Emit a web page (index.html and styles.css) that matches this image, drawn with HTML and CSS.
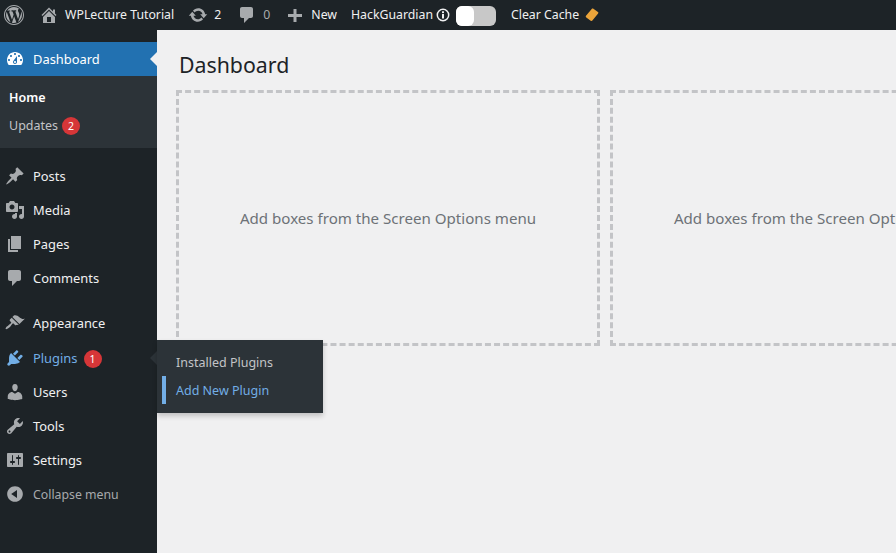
FILE: index.html
```
<!DOCTYPE html>
<html lang="en">
<head>
<meta charset="utf-8">
<title>Dashboard</title>
<link rel="stylesheet" href="styles.css">
</head>
<body>
<header class="bar">
  <svg class="logo" viewBox="0 0 20 20"><path d="M20 10c0-5.52-4.48-10-10-10S0 4.48 0 10s4.48 10 10 10 10-4.48 10-10zM10 1.01c4.97 0 8.99 4.02 8.99 8.99s-4.02 8.99-8.99 8.99S1.01 14.97 1.01 10 5.03 1.01 10 1.01zM8.01 14.82L4.96 6.61c.49-.03 1.05-.08 1.05-.08.43-.05.38-1.01-.06-.99 0 0-1.29.1-2.13.1-.15 0-.33 0-.52-.01 1.44-2.17 3.9-3.6 6.7-3.6 2.09 0 3.99.79 5.41 2.09-.6-.1-1.45.35-1.45 1.42 0 .66.38 1.22.79 1.88.31.54.5 1.22.5 2.21 0 1.34-1.27 4.48-1.27 4.48l-2.71-7.5c.48-.03.75-.16.75-.16.43-.05.38-1.1-.05-1.08 0 0-1.3.11-2.14.11-.78 0-2.11-.11-2.11-.11-.43-.02-.48 1.06-.05 1.08l.84.08 1.12 3.04zm6.02 2.15L16.64 10s.67-1.69.39-3.81c.63 1.14.94 2.42.94 3.81 0 2.96-1.56 5.58-3.94 6.97zM2.68 6.77L6.5 17.25c-2.67-1.3-4.47-4.08-4.47-7.25 0-1.16.2-2.23.65-3.23zm7.45 4.53l2.29 6.25c-.75.27-1.57.42-2.42.42-.72 0-1.41-.11-2.06-.3z"/></svg>
  <span class="bar-item site">
    <svg class="bar-icon" viewBox="0 0 20 20"><path d="M16 8.5l1.53 1.53-1.06 1.06L10 4.62l-6.47 6.47-1.06-1.06L10 2.5l4 4v-2h2v4zm-6-2.46l6 5.99V18H4v-5.97zM12 17v-5H8v5h4z"/></svg>
    <span>WPLecture Tutorial</span>
  </span>
  <span class="bar-item updates">
    <svg class="bar-icon" viewBox="0 0 20 20"><path d="M10.2 3.28c3.53 0 6.43 2.61 6.92 6h2.08l-3.5 4-3.5-4h2.32c-.45-1.97-2.21-3.45-4.32-3.45-1.45 0-2.73.71-3.54 1.78L4.95 5.66C6.23 4.2 8.11 3.28 10.2 3.28zm-.4 13.44c-3.52 0-6.43-2.61-6.92-6H.8l3.5-4c1.17 1.33 2.33 2.67 3.5 4H5.48c.45 1.97 2.21 3.45 4.32 3.45 1.45 0 2.73-.71 3.54-1.78l1.71 1.95c-1.28 1.46-3.15 2.38-5.25 2.38z"/></svg>
    <span>2</span>
  </span>
  <span class="bar-item comments">
    <svg class="bar-icon" viewBox="0 0 20 20"><path d="M5 2h9c1.1 0 2 .9 2 2v7c0 1.1-.9 2-2 2h-2l-5 5v-5H5c-1.1 0-2-.9-2-2V4c0-1.1.9-2 2-2z"/></svg>
    <span class="muted">0</span>
  </span>
  <span class="bar-item new">
    <svg class="bar-icon" viewBox="0 0 20 20"><path d="M17 9v3h-5.500v5h-3v-5H3V9h5.500V4h3v5z"/></svg>
    <span>New</span>
  </span>
  <span class="bar-item guardian">
    <span>HackGuardian</span>
    <svg class="info" viewBox="0 0 14 14"><circle cx="7" cy="7" r="5.700" fill="none" stroke="#f0f0f1" stroke-width="1.500"/><rect x="6" y="6" width="2" height="4.500" fill="#f0f0f1"/><rect x="6" y="3.300" width="2" height="1.800" fill="#f0f0f1"/></svg>
    <span class="toggle"><span class="knob"></span></span>
  </span>
  <span class="bar-item cache">
    <span>Clear Cache</span>
    <svg class="cache-icon" viewBox="0 0 14 14"><path d="M8.400.800l4.500 3.300c.6.400.6 1 .2 1.500l-5.700 7c-.5.600-1.200.6-1.700.2L1.300 9.500c-.6-.4-.7-1.100-.3-1.700L6.700 1c.5-.6 1.100-.6 1.700-.2z" fill="#eba43a"/></svg>
  </span>
</header>

<div class="layout">
  <nav class="side">
    <a class="item current">
      <svg class="ico" viewBox="0 0 20 20"><path d="M3.760 16h12.480c1.100-1.370 1.760-3.110 1.760-5 0-4.420-3.580-8-8-8s-8 3.580-8 8c0 1.890.660 3.630 1.760 5zM10 4c.550 0 1 .450 1 1s-.450 1-1 1-1-.450-1-1 .450-1 1-1zM6 6c.550 0 1 .450 1 1s-.450 1-1 1-1-.450-1-1 .450-1 1-1zm8 0c.550 0 1 .450 1 1s-.450 1-1 1-1-.450-1-1 .450-1 1-1zm-5.370 5.550L12 7v6c0 1.100-.900 2-2 2s-2-.900-2-2c0-.570.240-1.080.630-1.450zM4 10c.550 0 1 .450 1 1s-.450 1-1 1-1-.450-1-1 .450-1 1-1zm12 0c.550 0 1 .450 1 1s-.450 1-1 1-1-.450-1-1 .450-1 1-1zm-5 3c0-.550-.450-1-1-1s-1 .450-1 1 .450 1 1 1 1-.450 1-1z"/></svg>
      <span>Dashboard</span>
      <i class="notch"></i>
    </a>
    <div class="sub">
      <a class="sub-link strong">Home</a>
      <a class="sub-link">Updates <b class="badge">2</b></a>
    </div>
    <a class="item first">
      <svg class="ico" viewBox="0 0 20 20"><path d="M10.440 3.020l1.820-1.820 6.360 6.350-1.830 1.820c-1.050-.680-2.480-.570-3.410.360l-.750.750c-.920.930-1.040 2.350-.350 3.410l-1.830 1.820-2.410-2.410-2.800 2.790c-.420.420-3.380 2.710-3.800 2.290s1.860-3.390 2.280-3.810l2.790-2.790L4.100 9.360l1.830-1.820c1.050.690 2.480.570 3.400-.360l.750-.750c.930-.920 1.050-2.350.360-3.410z"/></svg>
      <span>Posts</span>
    </a>
    <a class="item">
      <svg class="ico" viewBox="0 0 20 20"><path d="M13 11V4c0-.550-.450-1-1-1h-1.670L9 1H5L3.670 3H2c-.550 0-1 .450-1 1v7c0 .550.450 1 1 1h10c.550 0 1-.450 1-1zM7 4.500c1.380 0 2.500 1.120 2.500 2.500S8.380 9.500 7 9.500 4.500 8.380 4.500 7 5.620 4.500 7 4.500zM14 6h5v10.500c0 1.380-1.120 2.500-2.500 2.500S14 17.880 14 16.500s1.120-2.500 2.500-2.500c.170 0 .340.020.500.050V9h-3V6zm-4 8.050V13h2v3.500c0 1.380-1.120 2.500-2.500 2.500S7 17.880 7 16.500 8.120 14 9.500 14c.170 0 .340.020.500.050z"/></svg>
      <span>Media</span>
    </a>
    <a class="item">
      <svg class="ico" viewBox="0 0 20 20"><path d="M6 15V2h10v13H6zm-1 1h8v2H3V5h2v11z"/></svg>
      <span>Pages</span>
    </a>
    <a class="item">
      <svg class="ico" viewBox="0 0 20 20"><path d="M5 2h9c1.100 0 2 .900 2 2v7c0 1.100-.900 2-2 2h-2l-5 5v-5H5c-1.100 0-2-.900-2-2V4c0-1.100.900-2 2-2z"/></svg>
      <span>Comments</span>
    </a>
    <a class="item first">
      <svg class="ico" viewBox="0 0 20 20"><path d="M14.480 11.060L7.410 3.990l1.500-1.500c.500-.560 2.300-.470 3.510.320 1.210.800 1.430 1.280 2.910 2.100 1.180.640 2.450 1.260 4.450.850zm-.710.710L6.700 4.700 4.930 6.470c-.390.390-.390 1.020 0 1.410l1.060 1.060c.390.390.390 1.030 0 1.420-.600.600-1.430 1.110-2.210 1.690-.350.260-.700.530-1.010.840C1.430 13.230.180 15.600.700 16.120c.520.520 2.900-.720 4.210-2.070.310-.310.580-.660.840-1.010.580-.780 1.090-1.610 1.690-2.210.390-.390 1.030-.390 1.420 0l1.060 1.060c.390.390 1.020.390 1.410 0z"/></svg>
      <span>Appearance</span>
    </a>
    <a class="item plugins">
      <svg class="ico" viewBox="0 0 20 20"><path d="M13.110 4.360L9.870 7.600 8 5.730l3.240-3.240c.350-.340 1.050-.200 1.560.320.520.510.660 1.210.310 1.550zm-8 1.770l.910-1.120 9.010 9.010-1.190.840c-.710.710-2.630 1.160-3.820 1.160H6.140L4.900 17.260c-.590.590-1.540.590-2.120 0-.590-.580-.590-1.530 0-2.120l1.240-1.240v-3.880c0-1.130.400-3.190 1.090-3.890zm7.260 3.970l3.240-3.240c.340-.350 1.040-.210 1.550.310.520.510.660 1.210.310 1.550l-3.240 3.250z"/></svg>
      <span>Plugins</span>
      <b class="badge">1</b>
      <i class="pointer"></i>
      <div class="flyout">
        <span class="fly-link">Installed Plugins</span>
        <span class="fly-link active">Add New Plugin</span>
      </div>
    </a>
    <a class="item">
      <svg class="ico" viewBox="0 0 20 20"><path d="M10 9.250c-2.270 0-2.730-3.440-2.730-3.440C7 4.020 7.820 2 9.970 2c2.160 0 2.980 2.020 2.710 3.810 0 0-.410 3.440-2.680 3.440zm0 2.570L12.720 10c2.390 0 4.520 2.330 4.520 4.530v2.490s-3.650 1.130-7.240 1.130c-3.650 0-7.240-1.130-7.240-1.130v-2.490c0-2.250 1.940-4.480 4.470-4.480z"/></svg>
      <span>Users</span>
    </a>
    <a class="item">
      <svg class="ico" viewBox="0 0 20 20"><path d="M16.680 9.770c-1.340 1.340-3.300 1.670-4.950.990l-5.410 6.520c-.990.990-2.590.990-3.580 0s-.990-2.590 0-3.570l6.520-5.420c-.680-1.650-.350-3.610.990-4.950 1.280-1.280 3.120-1.620 4.720-1.060l-2.890 2.890 2.820 2.820 2.860-2.870c.530 1.580.180 3.390-1.080 4.650zM3.810 16.210c.400.390 1.040.390 1.430 0 .400-.400.400-1.040 0-1.430-.390-.400-1.030-.400-1.430 0-.390.390-.390 1.030 0 1.430z"/></svg>
      <span>Tools</span>
    </a>
    <a class="item">
      <svg class="ico" viewBox="0 0 20 20"><path d="M18 16V4c0-.550-.450-1-1-1H3c-.550 0-1 .450-1 1v12c0 .550.450 1 1 1h14c.550 0 1-.450 1-1zM8 11h1c.550 0 1 .450 1 1s-.450 1-1 1H8v1.500c0 .280-.220.500-.500.500s-.500-.220-.500-.500V13H6c-.550 0-1-.450-1-1s.450-1 1-1h1V5.500c0-.280.220-.500.500-.500s.500.220.500.500V11zm5-2h-1c-.550 0-1-.450-1-1s.450-1 1-1h1V5.500c0-.280.220-.500.500-.500s.500.220.500.500V7h1c.550 0 1 .450 1 1s-.450 1-1 1h-1v5.500c0 .280-.220.500-.500.500s-.500-.220-.500-.500V9z"/></svg>
      <span>Settings</span>
    </a>
    <a class="item collapse">
      <svg class="ico" viewBox="0 0 20 20"><path d="M10 2.160c4.330 0 7.840 3.510 7.840 7.840s-3.510 7.840-7.840 7.840S2.160 14.330 2.160 10 5.710 2.160 10 2.160zm2 11.720V6.120L6.180 9.970z"/></svg>
      <span>Collapse menu</span>
    </a>
  </nav>
  <main class="main">
    <h1 class="title">Dashboard</h1>
    <div class="boxes">
      <div class="box">Add boxes from the Screen Options menu</div>
      <div class="box">Add boxes from the Screen Options menu</div>
    </div>
  </main>
</div>
</body>
</html>
```
FILE: styles.css
```
* { box-sizing: border-box; }
html, body { margin: 0; height: 100%; overflow: hidden; }
body {
  font-family: "Noto Sans", "Open Sans", sans-serif;
  font-size: 12.500px;
  color: #f0f0f1;
  background: #f0f0f1;
  display: flex;
  flex-direction: column;
}
.bar {
  height: 30px;
  flex: none;
  background: #1d2327;
  display: flex;
  align-items: center;
  padding-left: 4px;
  font-size: 12.300px;
}
.logo { width: 20px; height: 20px; fill: #a7aaad; flex: none; }
.bar-item { display: flex; align-items: center; flex: none; white-space: nowrap; line-height: 28px; height: 28px; margin-top: -1px; }
.bar-icon { width: 20px; height: 20px; fill: #a7aaad; flex: none; margin-top: 1px; }
.site { margin-left: 15px; gap: 6px; }
.updates { margin-left: 14px; gap: 6px; }
.comments { margin-left: 16px; gap: 6px; }
.muted { color: #a7aaad; }
.new { margin-left: 15px; gap: 6px; }
.guardian { margin-left: 14px; }
.info { width: 14px; height: 14px; margin-left: 3px; flex: none; }
.toggle {
  width: 40px;
  height: 20px;
  margin-left: 6px;
  margin-top: 2px;
  border-radius: 6px;
  background: #c8c8c8;
  display: block;
}
.knob { display: block; width: 18px; height: 20px; border-radius: 6px; background: #fff; }
.cache { margin-left: 15px; }
.cache-icon { width: 14px; height: 14px; margin-left: 6px; margin-top: 1px; flex: none; }

.layout { flex: 1; display: flex; min-height: 0; }
.side {
  width: 157px;
  flex: none;
  background: #1d2327;
  padding-top: 12px;
}
.item {
  display: flex;
  align-items: center;
  height: 34px;
  padding-left: 5px;
  position: relative;
  color: #f0f0f1;
  font-size: 12.900px;
}
.item > span { margin-left: 8px; }
.ico { width: 20px; height: 20px; fill: #a7aaad; flex: none; }
.first { margin-top: 11px; }
.current { background: #2271b1; color: #fff; }
.current .ico { fill: #fff; }
.notch {
  position: absolute;
  right: 0;
  top: 10px;
  border: 7px solid transparent;
  border-left-width: 0;
  border-right: 7px solid #f0f0f1;
}
.sub {
  background: #2c3338;
  height: 72px;
  padding-top: 7px;
  display: flex;
  flex-direction: column;
}
.sub-link {
  height: 28px;
  padding-left: 9px;
  display: flex;
  align-items: center;
  gap: 4px;
  color: #c3c4c7;
}
.strong { color: #fff; font-weight: 600; }
.badge {
  width: 18px;
  height: 18px;
  margin-top: 1px;
  border-radius: 50%;
  background: #d63638;
  color: #fff;
  font-size: 10.500px;
  font-weight: 400;
  display: flex;
  align-items: center;
  justify-content: center;
  flex: none;
}
.plugins { margin-top: 1px; }
.plugins > span { color: #72aee6; }
.plugins .ico { fill: #72aee6; }
.plugins > .badge { margin-left: 6px; }
.pointer {
  position: absolute;
  right: 0;
  top: 10px;
  border: 7px solid transparent;
  border-left-width: 0;
  border-right: 7px solid #2c3338;
}
.flyout {
  position: absolute;
  left: 157px;
  top: -1px;
  width: 166px;
  height: 73px;
  background: #2c3338;
  padding-top: 8px;
  box-shadow: 0 3px 5px rgba(0, 0, 0, 0.2);
  display: flex;
  flex-direction: column;
  z-index: 2;
  font-size: 12.500px;
}
.fly-link {
  height: 28px;
  padding-left: 19px;
  display: flex;
  align-items: center;
  color: #c3c4c7;
  white-space: nowrap;
  position: relative;
}
.active { color: #72aee6; }
.active::before {
  content: "";
  position: absolute;
  left: 5px;
  top: 0;
  width: 4px;
  height: 28px;
  background: #72aee6;
}
.item.collapse { color: #a7aaad; font-size: 12.300px; }

.main { flex: 1; min-width: 0; padding-left: 19px; overflow: hidden; }
.title {
  margin: 0;
  height: 60px;
  padding: 20px 0 0 3px;
  font-size: 21.300px;
  font-weight: 400;
  line-height: 30px;
  color: #1d2327;
}
.boxes { display: flex; gap: 10px; }
.box {
  width: 424px;
  height: 256px;
  flex: none;
  border: 3px dashed #c3c4c7;
  display: flex;
  align-items: center;
  justify-content: center;
  font-size: 15.100px;
  padding-bottom: 1px;
  color: #6d7277;
  white-space: nowrap;
}
```
